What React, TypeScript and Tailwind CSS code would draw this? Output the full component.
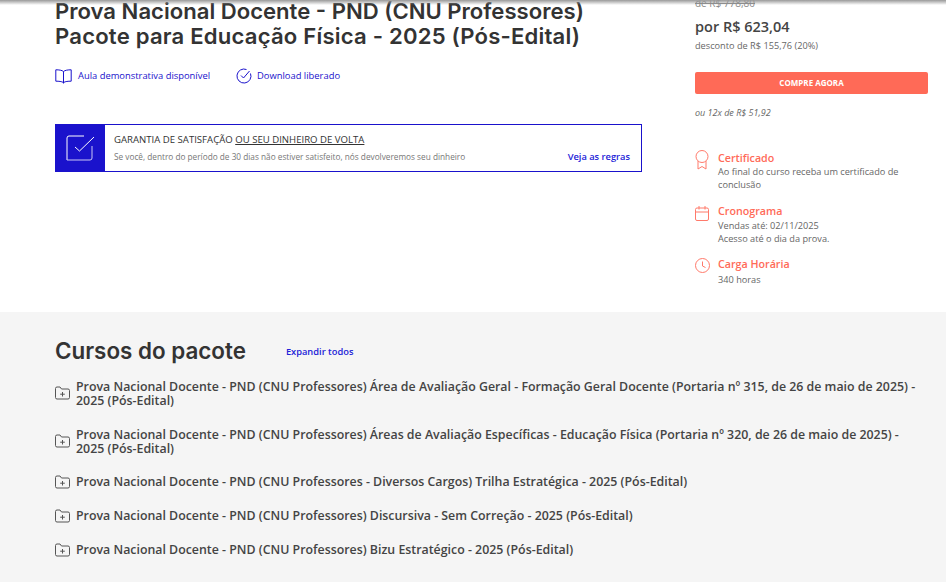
import React from "react";

const sans = "font-['Open_Sans',sans-serif]";

function FolderPlus() {
  return (
    <svg width="15" height="14" viewBox="0 0 15 14" fill="none" stroke="#555" strokeWidth="1" className="shrink-0">
      <path d="M.5 2.500a1.500 1.500 0 0 1 1.500-1.500h3l1.500 2h6.500a1.500 1.500 0 0 1 1.500 1.500v7a1.500 1.500 0 0 1-1.500 1.500H2a1.500 1.500 0 0 1-1.500-1.500z" />
      <path d="M7.500 6v4.500M5.200 8.200h4.600" />
    </svg>
  );
}

const courses: string[] = [
  "Prova Nacional Docente - PND (CNU Professores) Área de Avaliação Geral - Formação Geral Docente (Portaria nº 315, de 26 de maio de 2025) - 2025 (Pós-Edital)",
  "Prova Nacional Docente - PND (CNU Professores) Áreas de Avaliação Específicas - Educação Física (Portaria nº 320, de 26 de maio de 2025) - 2025 (Pós-Edital)",
  "Prova Nacional Docente - PND (CNU Professores - Diversos Cargos) Trilha Estratégica - 2025 (Pós-Edital)",
  "Prova Nacional Docente - PND (CNU Professores) Discursiva - Sem Correção - 2025 (Pós-Edital)",
  "Prova Nacional Docente - PND (CNU Professores) Bizu Estratégico - 2025 (Pós-Edital)",
];

export default function App() {
  return (
    <div className={`relative h-[582px] w-[946px] overflow-hidden bg-white ${sans}`}>
      <div className="absolute inset-x-0 top-0 z-10 h-[5px] bg-gradient-to-b from-[#999999] to-transparent" />

      <section className="flex h-[312px] pl-[55px] pr-[18px]">
        <div className="w-[587px] shrink-0">
          <h1 className="mt-[-1px] font-['Inter',sans-serif] text-[22.100px] leading-[25px] font-semibold whitespace-nowrap text-[#333]">
            <span className="block">Prova Nacional Docente - PND (CNU Professores)</span>
            <span className="block tracking-[0.2px]">Pacote para Educação Física - 2025 (Pós-Edital)</span>
          </h1>

          <div className="mt-[18px] flex h-[18px] items-center text-[9.400px] text-[#1a12cc]">
            <svg width="17" height="15" viewBox="0 0 17 15" fill="none" stroke="#1a12cc" strokeWidth="1" className="mr-[6px]">
              <path d="M8.500 2.500C7 1.200 4 .8.800.8v11.400c3.200 0 5.700.2 7.700 1.300 2-1.100 4.500-1.300 7.700-1.300V.8c-3.200 0-6.200.4-7.700 1.700zM8.500 2.500v12" />
            </svg>
            <span>Aula demonstrativa disponível</span>
            <svg width="16" height="16" viewBox="0 0 16 16" fill="none" stroke="#1a12cc" strokeWidth="1" className="ml-[26px] mr-[5px]">
              <path d="M14.500 5.500A7 7 0 1 1 10.500 1.500" />
              <path d="M5 7.500l2.500 2.500L13.500 3" />
            </svg>
            <span>Download liberado</span>
          </div>

          <div className="mt-[39px] flex h-[48px] border border-[#1a12cc]">
            <div className="flex w-[49px] shrink-0 items-center justify-center bg-[#1a12cc]">
              <svg width="30" height="30" viewBox="0 0 30 30" fill="none" stroke="#fff" strokeWidth="1" className="ml-[-2px]">
                <path d="M19 3H4a2 2 0 0 0-2 2v22" />
                <path d="M2 27h23a2 2 0 0 0 2-2V13" stroke="#c9c6f5" />
                <path d="M10 14l4.500 4L29 4" />
              </svg>
            </div>
            <div className="flex flex-1 flex-col pl-[9px] pr-[11px]">
              <p className="mt-[8px] text-[9.600px] leading-[14px] text-[#333]">
                GARANTIA DE SATISFAÇÃO <span className="underline">OU SEU DINHEIRO DE VOLTA</span>
              </p>
              <div className="mt-[4px] flex items-center justify-between">
                <span className="text-[8.260px] leading-[12px] text-[#777]">
                  Se você, dentro do período de 30 dias não estiver satisfeito, nós devolveremos seu dinheiro
                </span>
                <span className="text-[9.300px] leading-[12px] font-semibold text-[#2222d8]">Veja as regras</span>
              </div>
            </div>
          </div>
        </div>

        <aside className="ml-[53px] w-[233px] shrink-0">
          <p className="mt-[-3px] text-[10px] leading-[13px] text-[#888] line-through">de R$ 778,80</p>
          <p className="mt-[7px] text-[14.500px] leading-[20px] font-semibold text-[#444]">por R$ 623,04</p>
          <p className="mt-[3px] text-[9.200px] leading-[12px] text-[#666]">desconto de R$ 155,76 (20%)</p>
          <button className="mt-[20px] flex h-[22px] w-full items-center justify-center rounded-[2px] bg-[#ff6a57] text-[8px] font-bold text-white">
            COMPRE AGORA
          </button>
          <p className="mt-[13px] text-[9px] leading-[12px] text-[#666] italic">ou 12x de R$ 51,92</p>

          <div className="mt-[32px] flex gap-[9px]">
            <svg width="14" height="20" viewBox="0 0 14 20" fill="none" stroke="#ff7a6b" strokeWidth="1" className="mt-[-1px] shrink-0">
              <circle cx="7" cy="6.500" r="6" />
              <path d="M3 11v8l4-2.500 4 2.500v-8" />
            </svg>
            <div>
              <p className="text-[10.700px] leading-[15px] font-semibold text-[#ff6a57]">Certificado</p>
              <p className="text-[9.200px] leading-[12.500px] text-[#666]">Ao final do curso receba um certificado de conclusão</p>
            </div>
          </div>

          <div className="mt-[13px] flex gap-[9px]">
            <svg width="14" height="15" viewBox="0 0 14 15" fill="none" stroke="#ff7a6b" strokeWidth="1" className="mt-[2px] shrink-0">
              <rect x=".5" y="2" width="13" height="12.500" rx="1.500" />
              <path d="M.5 6h13M4 0v3.500M10 0v3.500" />
            </svg>
            <div>
              <p className="text-[10.700px] leading-[15px] font-semibold text-[#ff6a57]">Cronograma</p>
              <p className="text-[9.200px] leading-[13px] text-[#666]">
                Vendas até: 02/11/2025
                <br />
                Acesso até o dia da prova.
              </p>
            </div>
          </div>

          <div className="mt-[12px] flex gap-[9px]">
            <svg width="15" height="15" viewBox="0 0 15 15" fill="none" stroke="#ff7a6b" strokeWidth="1" className="mt-[1px] mr-[-1px] shrink-0">
              <circle cx="7.500" cy="7.500" r="7" />
              <path d="M7.500 3.500v4.500l3 1.500" />
            </svg>
            <div>
              <p className="text-[10.700px] leading-[15px] font-semibold text-[#ff6a57]">Carga Horária</p>
              <p className="mt-[1px] text-[9.200px] leading-[13px] text-[#666]">340 horas</p>
            </div>
          </div>
        </aside>
      </section>

      <section className="h-[270px] bg-[#f5f5f5] pl-[55px] pr-[30px]">
        <div className="flex items-center pt-[24px]">
          <h2 className="font-['Inter',sans-serif] text-[22.400px] leading-[30px] font-semibold text-[#333]">Cursos do pacote</h2>
          <span className="ml-[40px] mt-[2px] text-[9.300px] font-semibold text-[#2222d8]">Expandir todos</span>
        </div>
        <ul className="mt-[13px] flex flex-col gap-[20px]">
          {courses.map((t, i) => (
            <li key={t} className="flex items-center gap-[6px]">
              <FolderPlus />
              <span className={i < 2 ? "-mb-px pt-px text-[12.370px] leading-[14px] font-semibold text-[#444]" : "text-[12.370px] leading-[14px] font-semibold text-[#444]"}>{t}</span>
            </li>
          ))}
        </ul>
      </section>
    </div>
  );
}
